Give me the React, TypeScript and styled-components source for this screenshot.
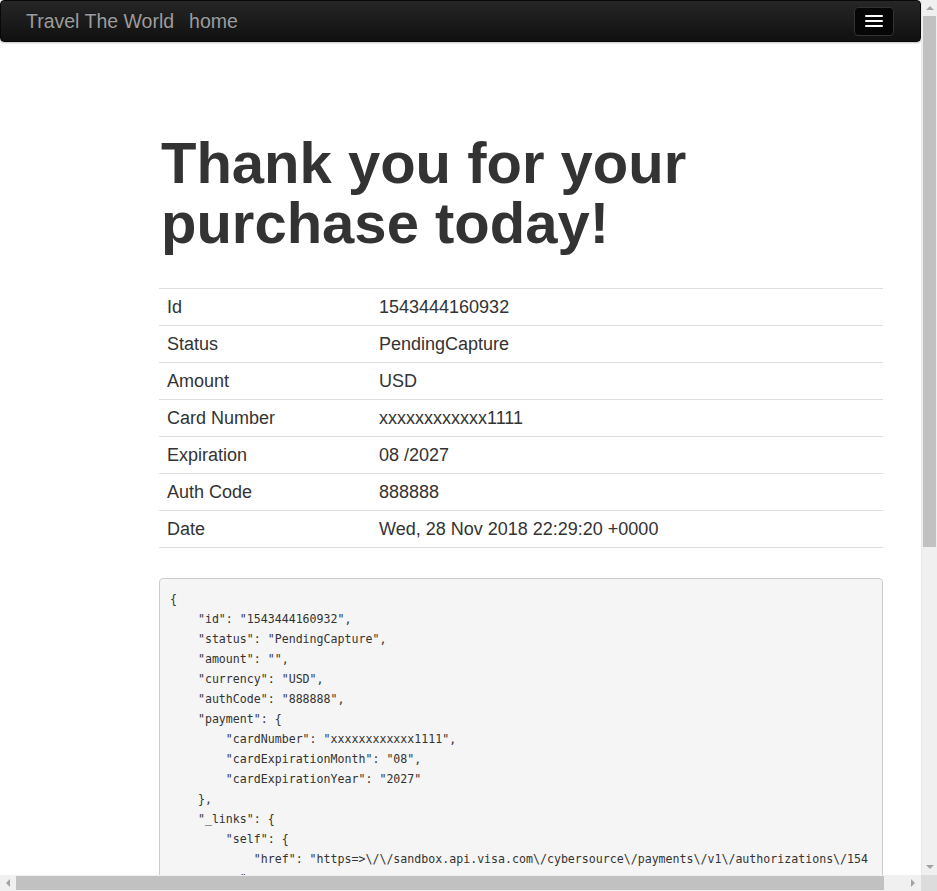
import React from "react";
import styled, { createGlobalStyle } from "styled-components";

const GlobalStyle = createGlobalStyle`
  html, body {
    margin: 0;
    padding: 0;
    overflow: hidden;
    background: #ffffff;
  }
  * { box-sizing: border-box; }
`;

const Frame = styled.div`
  display: grid;
  grid-template-columns: 921px 16px;
  grid-template-rows: 875px 16px;
  width: 937px;
  height: 891px;
  font-family: "Liberation Sans", Arial, sans-serif;
  color: #333333;
`;

const Viewport = styled.div`
  overflow: hidden;
  display: flex;
  flex-direction: column;
  background: #ffffff;
`;

const Navbar = styled.nav`
  flex: none;
  height: 42px;
  display: flex;
  align-items: center;
  justify-content: space-between;
  padding: 0 26px 0 25px;
  border: 1px solid #080808;
  border-radius: 4px;
  background: linear-gradient(to bottom, #262626 0%, #101010 100%);
  box-shadow: 0 1px 2px rgba(0, 0, 0, 0.25);
`;

const NavLinks = styled.div`
  display: flex;
  align-items: center;
  gap: 15px;
`;

const NavLink = styled.a`
  font-size: 19.5px;
  color: #9d9d9d;
  text-decoration: none;
  text-shadow: 0 -1px 0 rgba(0, 0, 0, 0.25);
  line-height: 20px;
`;

const Toggle = styled.button`
  width: 40px;
  height: 29px;
  padding: 0;
  display: flex;
  flex-direction: column;
  align-items: center;
  justify-content: center;
  gap: 3px;
  border: 1px solid #333333;
  border-radius: 4px;
  background: #060606;
`;

const IconBar = styled.span`
  display: block;
  width: 18px;
  height: 2px;
  border-radius: 1px;
  background: #ffffff;
`;

const Container = styled.main`
  padding: 0 0 0 159px;
  width: 883px;
`;

const Title = styled.h1`
  margin: 91px 0 35px 2px;
  font-size: 58px;
  line-height: 60px;
  font-weight: 700;
  color: #333333;
  width: 560px;
`;

const Table = styled.table`
  width: 724px;
  border-collapse: collapse;
  border-spacing: 0;
  font-size: 18px;
  line-height: 20px;
`;

const Cell = styled.td<{ $label?: boolean }>`
  padding: 8px;
  border-top: 1px solid #dddddd;
  vertical-align: top;
  width: ${(p) => (p.$label ? "212px" : "auto")};
`;

const Row = styled.tr`
  &:last-child td {
    border-bottom: 1px solid #dddddd;
  }
`;

const Pre = styled.pre`
  margin: 30px 0 0 0;
  width: 724px;
  padding: 10px 10px 10px 10px;
  font-family: "DejaVu Sans Mono", "Liberation Mono", monospace;
  font-size: 11.6px;
  line-height: 20px;
  color: #333333;
  background: #f5f5f5;
  border: 1px solid #cccccc;
  border-radius: 4px;
  white-space: pre-wrap;
  word-break: break-all;
  overflow: hidden;
`;

const VScroll = styled.div`
  display: flex;
  flex-direction: column;
  background: #f0f0f0;
  border-left: 1px solid #e8e8e8;
`;

const HScroll = styled.div`
  display: flex;
  flex-direction: row;
  background: #f0f0f0;
`;

const ArrowBox = styled.div`
  flex: none;
  width: 16px;
  height: 16px;
  display: flex;
  align-items: center;
  justify-content: center;
`;

const VTrack = styled.div`
  flex: 1;
  display: flex;
  flex-direction: column;
  padding: 0 1px;
`;

const HTrack = styled.div`
  flex: 1;
  display: flex;
  flex-direction: row;
  padding: 1px 0;
`;

const Thumb = styled.div`
  background: #c1c1c1;
  flex: none;
`;

const Corner = styled.div`
  background: #dcdcdc;
`;

const Arrow = ({ dir }: { dir: "up" | "down" | "left" | "right" }) => {
  const pts = {
    up: "4,10 8,6 12,10",
    down: "4,6 8,10 12,6",
    left: "10,4 6,8 10,12",
    right: "6,4 10,8 6,12",
  }[dir];
  return (
    <svg width="16" height="16" viewBox="0 0 16 16">
      <polygon points={pts} fill="#a3a3a3" />
    </svg>
  );
};

const rows: [string, string][] = [
  ["Id", "1543444160932"],
  ["Status", "PendingCapture"],
  ["Amount", "USD"],
  ["Card Number", "xxxxxxxxxxxx1111"],
  ["Expiration", "08 /2027"],
  ["Auth Code", "888888"],
  ["Date", "Wed, 28 Nov 2018 22:29:20 +0000"],
];

const json = `{
    "id": "1543444160932",
    "status": "PendingCapture",
    "amount": "",
    "currency": "USD",
    "authCode": "888888",
    "payment": {
        "cardNumber": "xxxxxxxxxxxx1111",
        "cardExpirationMonth": "08",
        "cardExpirationYear": "2027"
    },
    "_links": {
        "self": {
            "href": "https=>\\/\\/sandbox.api.visa.com\\/cybersource\\/payments\\/v1\\/authorizations\\/154
          "
        },
        "capture": {
            "href": "https=>\\/\\/sandbox.api.visa.com\\/cybersource\\/payments\\/v1\\/authorizations\\/1543444160932\\/captures"
        }
    }
}`;

export default function App() {
  return (
    <>
      <GlobalStyle />
      <Frame>
        <Viewport>
          <Navbar>
            <NavLinks>
              <NavLink href="#">Travel The World</NavLink>
              <NavLink href="#">home</NavLink>
            </NavLinks>
            <Toggle aria-label="Toggle navigation">
              <IconBar />
              <IconBar />
              <IconBar />
            </Toggle>
          </Navbar>
          <Container>
            <Title>Thank you for your purchase today!</Title>
            <Table>
              <tbody>
                {rows.map(([k, v]) => (
                  <Row key={k}>
                    <Cell $label>{k}</Cell>
                    <Cell>{v}</Cell>
                  </Row>
                ))}
              </tbody>
            </Table>
            <Pre>{json}</Pre>
          </Container>
        </Viewport>
        <VScroll>
          <ArrowBox>
            <Arrow dir="up" />
          </ArrowBox>
          <VTrack>
            <Thumb style={{ height: 531 }} />
          </VTrack>
          <ArrowBox>
            <Arrow dir="down" />
          </ArrowBox>
        </VScroll>
        <HScroll>
          <ArrowBox>
            <Arrow dir="left" />
          </ArrowBox>
          <HTrack>
            <Thumb style={{ width: 868 }} />
          </HTrack>
          <ArrowBox>
            <Arrow dir="right" />
          </ArrowBox>
        </HScroll>
        <Corner />
      </Frame>
    </>
  );
}
